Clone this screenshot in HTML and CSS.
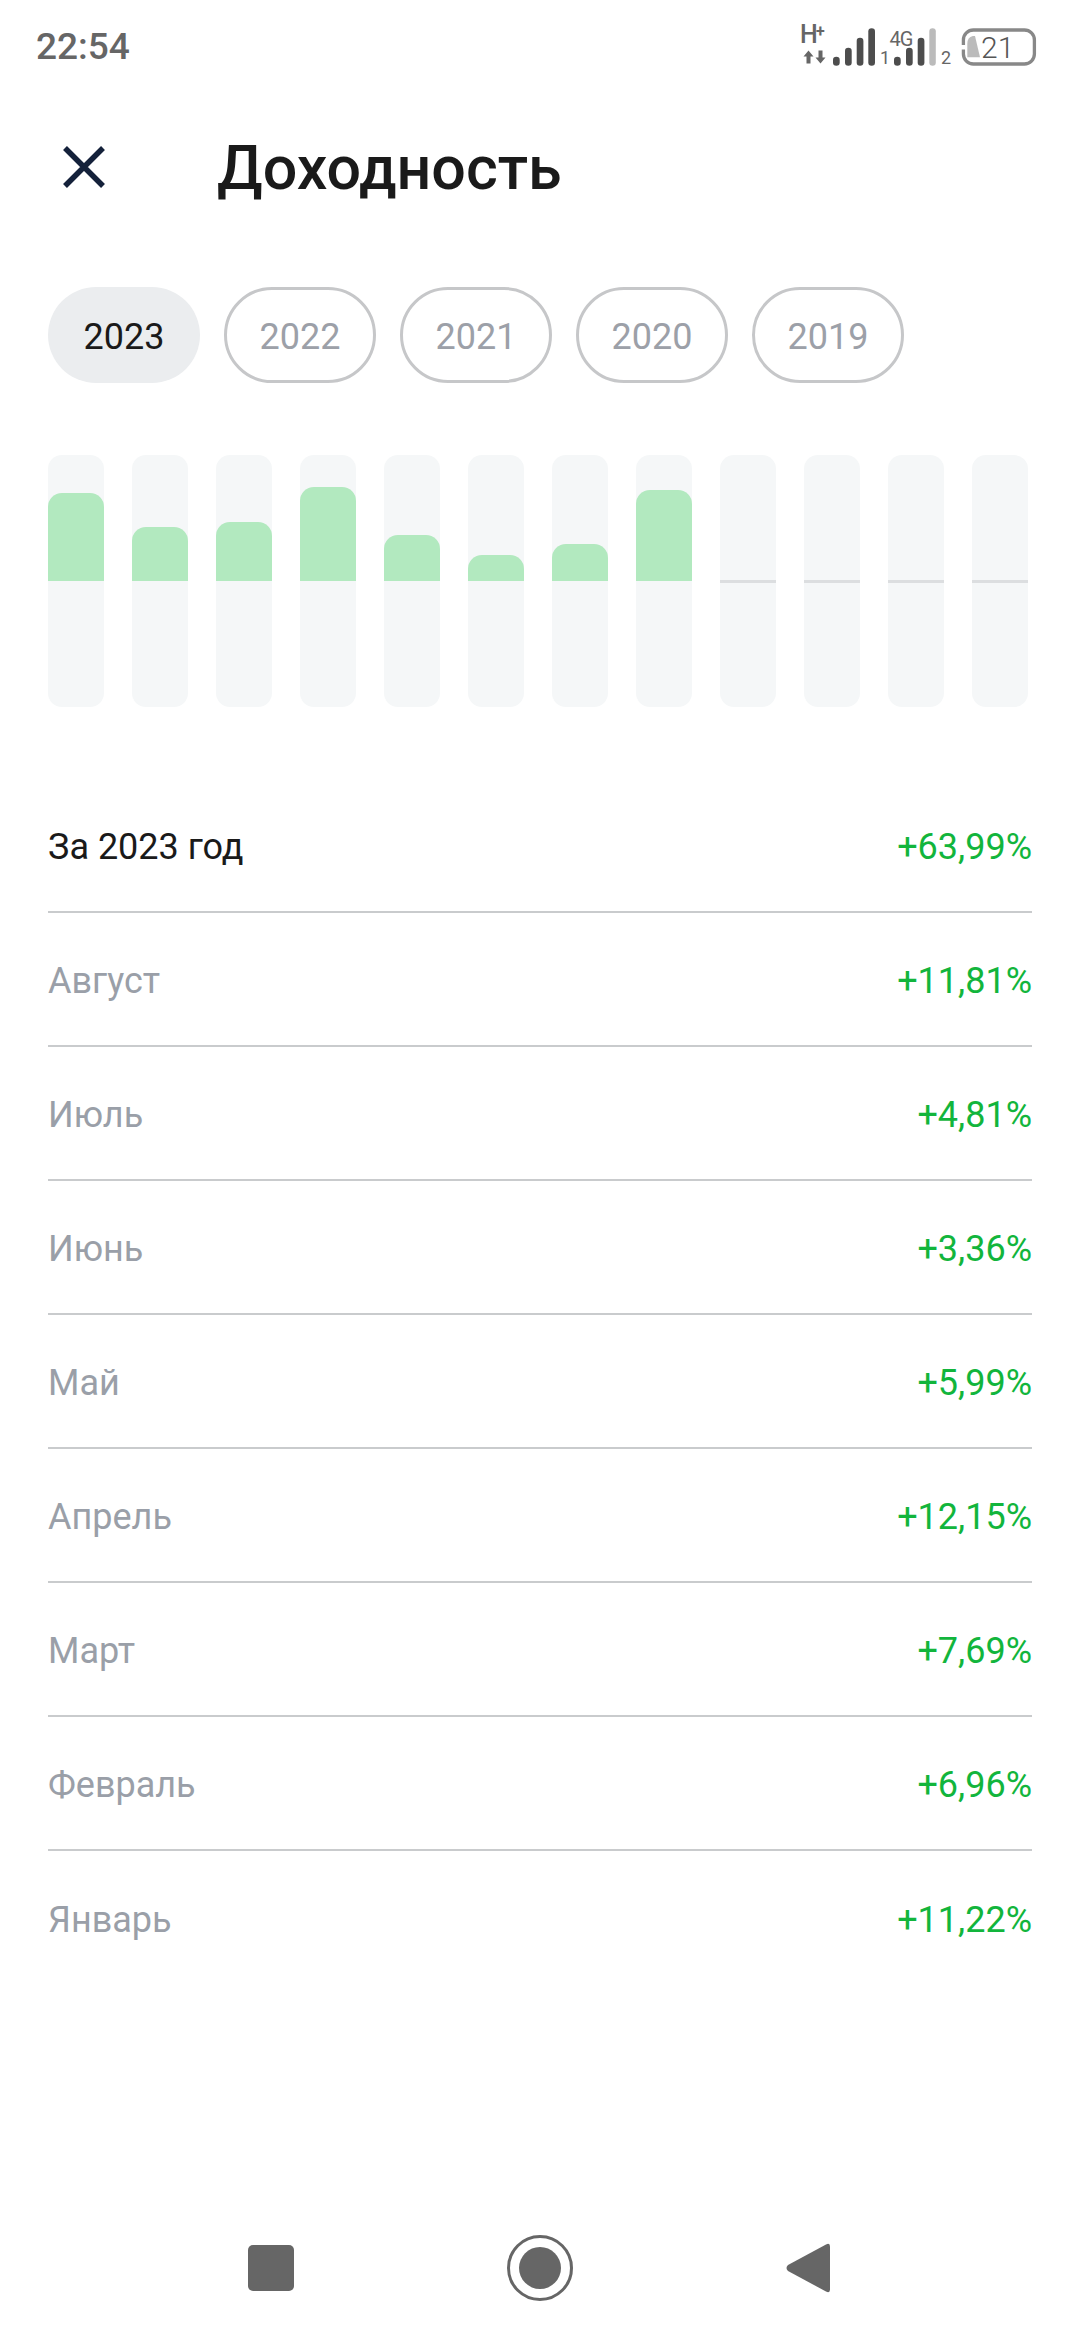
FILE: index.html
```html
<!DOCTYPE html>
<html lang="en">
<head>
  <meta charset="UTF-8">
  <title>Доходность</title>
  <link rel="stylesheet" href="styles.css">
</head>
<body>
  <div class="screen">

    <!-- Status bar -->
    <div class="status-bar">
      <span class="time">22:54</span>
      <svg class="status-icons" width="240" height="48" viewBox="0 0 240 48">
        <g fill="#666">
          <text x="0" y="19" class="st-h">H</text>
          <text x="16" y="13" class="st-plus">+</text>
          <path d="M8.500 26.500l5 6h-3v7h-4v-7h-3z"/>
          <path d="M20.500 39.500l-5-6h3v-7h4v7h3z"/>
          <text x="80" y="40" class="st-num">1</text>
          <text x="141" y="40" class="st-num">2</text>
          <text x="89.500" y="21.500" class="st-4g">4G</text>
        </g>
        <g fill="#4d4d4d">
          <rect x="33" y="32.700" width="6.700" height="9" rx="3.300"/>
          <rect x="45" y="23.700" width="6.700" height="18" rx="3.300"/>
          <rect x="56.700" y="13.700" width="6.700" height="28" rx="3.300"/>
          <rect x="68.300" y="4.300" width="6.700" height="37.400" rx="3.300"/>
          <rect x="94" y="32.700" width="6.700" height="9" rx="3.300"/>
          <rect x="106" y="23.700" width="6.700" height="18" rx="3.300"/>
          <rect x="117.700" y="13.700" width="6.700" height="28" rx="3.300"/>
        </g>
        <rect x="129.300" y="4.300" width="6.500" height="37.400" rx="3.200" fill="#bbb"/>
        <path d="M163.400 21v-5a10 10 0 0 1 10-10h51a10 10 0 0 1 10 10v14a10 10 0 0 1-10 10h-51a10 10 0 0 1-10-10v-4.500" fill="none" stroke="#888" stroke-width="3.300"/>
        <path d="M167.300 33.300V20q0-7 5.500-8h2.200L180 33.300z" fill="#bbb"/>
        <text x="181" y="34.300" class="st-level">21</text>
      </svg>
    </div>

    <!-- Header -->
    <div class="header">
      <svg class="close-icon" width="42" height="42" viewBox="0 0 42 42">
        <path d="M2 2l38 38M40 2L2 40" stroke="#14213a" stroke-width="5.500" fill="none"/>
      </svg>
      <h1 class="title">Доходность</h1>
    </div>

    <!-- Years -->
    <div class="years">
      <span class="year active">2023</span>
      <span class="year">2022</span>
      <span class="year">2021</span>
      <span class="year">2020</span>
      <span class="year">2019</span>
    </div>

    <!-- Chart, months Jan to Dec -->
    <div class="chart">
      <div class="bar"><div class="fill" style="height: 88px"></div></div>
      <div class="bar"><div class="fill" style="height: 54px"></div></div>
      <div class="bar"><div class="fill" style="height: 59px"></div></div>
      <div class="bar"><div class="fill" style="height: 94px"></div></div>
      <div class="bar"><div class="fill" style="height: 46px"></div></div>
      <div class="bar"><div class="fill" style="height: 26px"></div></div>
      <div class="bar"><div class="fill" style="height: 37px"></div></div>
      <div class="bar"><div class="fill" style="height: 91px"></div></div>
      <div class="bar empty"></div>
      <div class="bar empty"></div>
      <div class="bar empty"></div>
      <div class="bar empty"></div>
    </div>

    <!-- Monthly list -->
    <div class="rows">
      <div class="row total"><span class="row-name">За 2023 год</span><span class="row-value">+63,99%</span></div>
      <div class="row"><span class="row-name">Август</span><span class="row-value">+11,81%</span></div>
      <div class="row"><span class="row-name">Июль</span><span class="row-value">+4,81%</span></div>
      <div class="row"><span class="row-name">Июнь</span><span class="row-value">+3,36%</span></div>
      <div class="row"><span class="row-name">Май</span><span class="row-value">+5,99%</span></div>
      <div class="row"><span class="row-name">Апрель</span><span class="row-value">+12,15%</span></div>
      <div class="row"><span class="row-name">Март</span><span class="row-value">+7,69%</span></div>
      <div class="row"><span class="row-name">Февраль</span><span class="row-value">+6,96%</span></div>
      <div class="row"><span class="row-name">Январь</span><span class="row-value">+11,22%</span></div>
    </div>

    <!-- Navigation bar -->
    <div class="nav-bar">
      <svg width="46" height="46" viewBox="0 0 46 46"><rect width="46" height="46" rx="5" fill="#666"/></svg>
      <svg width="66" height="66" viewBox="0 0 66 66"><circle cx="33" cy="33" r="31.500" fill="none" stroke="#666" stroke-width="3"/><circle cx="33" cy="33" r="21" fill="#666"/></svg>
      <svg width="44" height="50" viewBox="0 0 44 50"><path d="M40 1.500q4-2 4 2v43q0 4-4 2L2 28q-3-3 0-6z" fill="#666"/></svg>
    </div>

  </div>
</body>
</html>
```

FILE: styles.css
```css
* {
  box-sizing: border-box;
}

body {
  margin: 0;
  background: #ffffff;
  font-family: Roboto, sans-serif;
}

.screen {
  width: 1080px;
  height: 2340px;
  display: flex;
  flex-direction: column;
  overflow: hidden;
}

/* Status bar */
.status-bar {
  height: 96px;
  padding: 24px 40px 0 36px;
  display: flex;
  justify-content: space-between;
  align-items: flex-start;
}

.time {
  margin-top: 1px;
  font-size: 37px;
  line-height: 44px;
  font-weight: 500;
  color: #666666;
}

.status-icons {
  overflow: visible;
}

.st-h {
  font: 500 25px Roboto, sans-serif;
}

.st-plus {
  font: 700 16px Roboto, sans-serif;
}

.st-num {
  font: 400 18px Roboto, sans-serif;
}

.st-4g {
  font: 400 20px Roboto, sans-serif;
  letter-spacing: -1px;
}

.st-level {
  font: 300 30px Roboto, sans-serif;
  fill: #555;
}

/* Header */
.header {
  height: 144px;
  padding-left: 63px;
  display: flex;
  align-items: center;
}

.close-icon {
  flex: none;
  margin-bottom: 2px;
}

.title {
  margin: 0 0 0 112px;
  font-size: 61px;
  line-height: 72px;
  font-weight: 500;
  color: #1a1a1a;
}

/* Years */
.years {
  margin-top: 47px;
  padding-left: 48px;
  display: flex;
  gap: 24px;
}

.year {
  width: 152px;
  height: 96px;
  padding-top: 3px;
  border: 3px solid #c6c7c9;
  border-radius: 48px;
  display: flex;
  justify-content: center;
  align-items: center;
  font-size: 36px;
  color: #9ca0a8;
}

.year.active {
  border: none;
  background: #ebedef;
  color: #1a1a1a;
}

/* Chart */
.chart {
  margin-top: 72px;
  padding-left: 48px;
  display: flex;
  gap: 28px;
}

.bar {
  position: relative;
  width: 56px;
  height: 252px;
  border-radius: 14px;
  background: #f5f7f8;
}

.fill {
  position: absolute;
  left: 0;
  right: 0;
  bottom: 126px;
  border-radius: 14px 14px 0 0;
  background: #b2e9bf;
}

.bar.empty::after {
  content: "";
  position: absolute;
  left: 0;
  right: 0;
  top: 125px;
  height: 3px;
  background: #dcdee0;
}

/* List */
.rows {
  margin-top: 72px;
  padding: 0 48px;
}

.row {
  height: 134px;
  padding-top: 3px;
  display: flex;
  justify-content: space-between;
  align-items: center;
  border-bottom: 2px solid #c9cbcd;
  font-size: 36px;
}

.row:last-child {
  border-bottom: none;
}

.row-name {
  color: #9a9fa8;
}

.total .row-name {
  color: #1a1a1a;
}

.row-value {
  color: #12b53c;
}

/* Navigation bar */
.nav-bar {
  margin-top: auto;
  height: 130px;
  padding: 0 0 15px 248px;
  display: flex;
  gap: 213px;
  align-items: center;
}
```
